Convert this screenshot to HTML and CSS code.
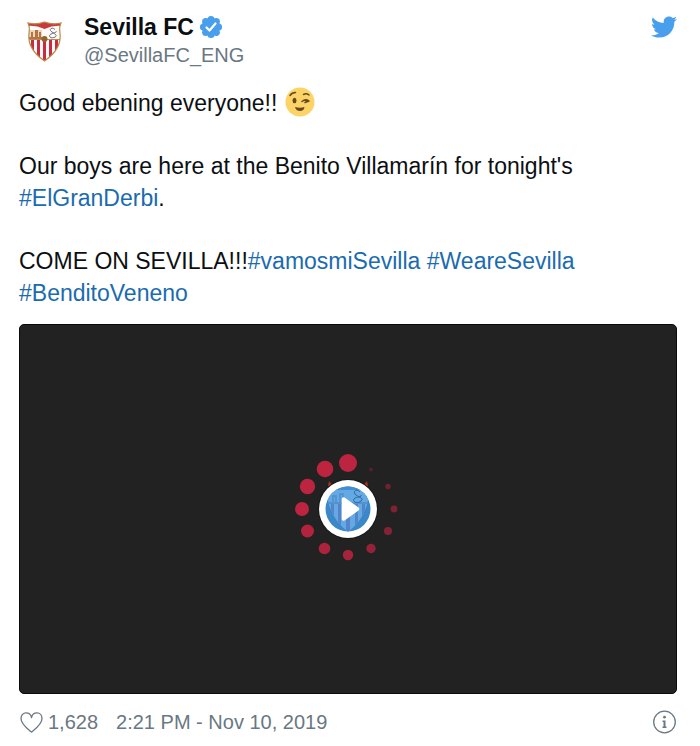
FILE: index.html
```html
<!DOCTYPE html>
<html lang="en">
<head>
    <meta charset="UTF-8">
    <meta name="viewport" content="width=device-width, initial-scale=1.0">
    <title>Sevilla FC on Twitter</title>
    <link rel="stylesheet" href="styles.css">
</head>
<body>
    <article class="tweet">
        <header class="tweet-header">
            <a class="author" href="#">
                <svg class="avatar" viewBox="0 0 52 56" role="img" aria-label="Sevilla FC crest">
                    <defs>
                        <clipPath id="shield">
                            <path d="M9 10Q17 12 25.500 9Q34 12 42 10Q40 14 41 20Q43 36 25.500 48Q8 36 10 20Q11 14 9 10Z"/>
                        </clipPath>
                    </defs>
                    <g clip-path="url(#shield)">
                        <path fill="#fffaf5" d="M5 5h42v45H5z"/>
                        <path fill="#c93a3f" d="M8 8h35v5Q34 12 25.500 16Q17 12 8 13z"/>
                        <path fill="#c72c42" d="M12 27h3v20h-3zM18 27h3v20h-3zM24 27h3v20h-3zM30 27h3v20h-3zM36 27h3v20h-3z"/>
                        <path fill="#ecd9b8" d="M10 17h13v9H10z"/>
                        <path fill="#b3744a" d="M12 19h2v6h-2zM16 17h3v8h-3zM20 19h2v6h-2zM10 24h13v2H10z"/>
                        <path fill="#b4934d" d="M9 26h33v1H9z"/>
                        <path fill="none" stroke="#526273" stroke-width=".9" d="M36 16.500c-3-3-7 0-3 2.500s6 4 2 5.500-6-2-3-3.500 6-1 5-3"/>
                    </g>
                    <circle cx="25.500" cy="26" r="3" fill="#8f642e"/>
                    <path fill="none" stroke="#b68b48" stroke-width="1.200" d="M9 10Q17 12 25.500 9Q34 12 42 10Q40 14 41 20Q43 36 25.500 48Q8 36 10 20Q11 14 9 10Z"/>
                </svg>
                <span class="author-text">
                    <span class="name">Sevilla FC
                        <svg class="verified" viewBox="0 0 24 24" role="img" aria-label="Verified account">
                            <g fill="#4a9fec">
                                <circle cx="12" cy="12" r="9"/>
                                <circle cx="12" cy="4.500" r="3.600"/>
                                <circle cx="17.300" cy="6.700" r="3.600"/>
                                <circle cx="19.500" cy="12" r="3.600"/>
                                <circle cx="17.300" cy="17.300" r="3.600"/>
                                <circle cx="12" cy="19.500" r="3.600"/>
                                <circle cx="6.700" cy="17.300" r="3.600"/>
                                <circle cx="4.500" cy="12" r="3.600"/>
                                <circle cx="6.700" cy="6.700" r="3.600"/>
                            </g>
                            <path d="M7.500 12.500l3 3L16.500 8.500" fill="none" stroke="#fff" stroke-width="2.200" stroke-linecap="round" stroke-linejoin="round"/>
                        </svg>
                    </span>
                    <span class="handle">@SevillaFC_ENG</span>
                </span>
            </a>
            <a class="bird" href="#" aria-label="View on Twitter">
                <svg viewBox="0 0 24 24">
                    <path fill="#4a9fec" d="M23.954 4.569c-.885.389-1.830.654-2.825.775 1.014-.611 1.794-1.574 2.163-2.723-.951.555-2.005.959-3.127 1.184-.896-.959-2.173-1.559-3.591-1.559-2.717 0-4.920 2.203-4.920 4.917 0 .39.045.765.127 1.124C7.691 8.094 4.066 6.130 1.640 3.161c-.427.722-.666 1.561-.666 2.475 0 1.710.87 3.213 2.188 4.096-.807-.026-1.566-.248-2.228-.616v.061c0 2.385 1.693 4.374 3.946 4.827-.413.111-.849.171-1.296.171-.314 0-.615-.03-.916-.086.631 1.953 2.445 3.377 4.604 3.417-1.680 1.319-3.809 2.105-6.102 2.105-.39 0-.779-.023-1.170-.067 2.189 1.394 4.768 2.209 7.557 2.209 9.054 0 13.999-7.496 13.999-13.986 0-.209 0-.42-.015-.63.961-.689 1.800-1.560 2.460-2.548l-.047-.02z"/>
                </svg>
            </a>
        </header>

        <div class="tweet-text">
            <p>Good ebening everyone!!
                <svg class="emoji" viewBox="0 0 30 30" role="img" aria-label="Winking face">
                    <circle cx="15" cy="15" r="14.500" fill="#fcd367"/>
                    <ellipse cx="9.500" cy="13.500" rx="2" ry="2.700" fill="#654a20"/>
                    <path d="M5 8.500q2-3 5.500-3M18.500 7.500q3-1.500 5.500.500M17 14.500q3.500-3 7-.5l-3-.2M24 14l-4 1.500" fill="none" stroke="#654a20" stroke-width="1.500" stroke-linecap="round" stroke-linejoin="round"/>
                    <path d="M10 20q5 1.500 9.500 0q-.5 4-4.500 4t-5-4z" fill="#654a20"/>
                </svg>
            </p>
            <p>Our boys are here at the Benito Villamarín for tonight's <a href="#">#ElGranDerbi</a>.</p>
            <p>COME ON SEVILLA!!!<a href="#">#vamosmiSevilla</a> <a href="#">#WeareSevilla</a> <a href="#">#BenditoVeneno</a></p>
        </div>

        <div class="video">
            <!-- loading dots, growing clockwise round the play button -->
            <svg class="spinner" viewBox="0 0 120 120" aria-hidden="true">
                <path d="M40 37l1-5 5 6zM80 37l-1-5-5 6z" fill="#ac321f"/>
                <g fill="#bc243f">
                    <circle cx="60" cy="14" r="9"/>
                    <circle cx="37" cy="20" r="8.300"/>
                    <circle cx="19.500" cy="37.500" r="7.700"/>
                    <circle cx="14" cy="60" r="7"/>
                    <circle cx="19.500" cy="82" r="6.500" opacity=".95"/>
                    <circle cx="36.500" cy="99.500" r="5.800" opacity=".9"/>
                    <circle cx="60" cy="106" r="5.200" opacity=".85"/>
                    <circle cx="83" cy="99.500" r="4.700" opacity=".75"/>
                    <circle cx="100" cy="82" r="4" opacity=".65"/>
                    <circle cx="106" cy="60" r="3.400" opacity=".6"/>
                    <circle cx="100" cy="37.500" r="2.700" opacity=".5"/>
                    <circle cx="83" cy="20.500" r="2" opacity=".3"/>
                </g>
            </svg>
            <button class="play" type="button" aria-label="Play video">
                <svg viewBox="0 0 60 60">
                    <defs>
                        <clipPath id="disc"><circle cx="30" cy="30" r="22.500"/></clipPath>
                        <clipPath id="crest"><path d="M9 5h42q2 30-21 48Q7 35 9 5z"/></clipPath>
                    </defs>
                    <circle cx="30" cy="30" r="30" fill="#171717"/>
                    <circle cx="30" cy="30" r="29" fill="#fff"/>
                    <circle cx="30" cy="30" r="22.500" fill="#3b88c8"/>
                    <g clip-path="url(#disc)">
                        <g clip-path="url(#crest)">
                            <path fill="#64a9e4" d="M7 5h46v50H7z"/>
                            <path fill="#478bd0" d="M7 7h46v4H7z"/>
                            <path fill="#5585c8" d="M13 25h3v30h-3zM20 25h3v30h-3zM28 25h4v30h-4zM37 25h3v30h-3zM44 25h3v30h-3z"/>
                            <path d="M9 24h42" stroke="#427fb5"/>
                            <path d="M15 23v-6h3v6M22 23v-8h3v8" fill="none" stroke="#4f90ca" stroke-width="1.500"/>
                            <path d="M42 13c-4-4-8 0-4 3s8 3 5 6-9 1-7-2 8-1 7-4" fill="none" stroke="#2e699f" stroke-width="1"/>
                        </g>
                    </g>
                    <path d="M25.500 20l14 10-14 10z" fill="#fff" stroke="#fff" stroke-width="3.500" stroke-linejoin="round"/>
                </svg>
            </button>
        </div>

        <footer class="tweet-footer">
            <a class="likes" href="#" aria-label="1,628 likes">
                <svg class="heart" viewBox="0 0 24 24">
                    <path d="M12.500 22C9.500 19.500 2 14.500 2 8.500C2 5 4.300 2.800 7 2.800C9.800 2.800 12 5 12.500 7.500C13 5 15.200 2.800 18 2.800C20.700 2.800 23 5 23 8.500C23 14.500 15.500 19.500 12.500 22Z" fill="none" stroke="#697882" stroke-width="1.300" stroke-linejoin="round"/>
                </svg>
                1,628
            </a>
            <a class="date" href="#">2:21 PM - Nov 10, 2019</a>
            <a class="info" href="#" aria-label="Twitter Ads info and privacy">
                <svg viewBox="0 0 24 24">
                    <circle cx="11.500" cy="12" r="10.800" fill="none" stroke="#697882" stroke-width="1.300"/>
                    <circle cx="11.500" cy="7.200" r="1.400" fill="#697882"/>
                    <path d="M9.500 10.500h3v6H13.500V18H9.500v-1.500h1V12h-1z" fill="#697882"/>
                </svg>
            </a>
        </footer>
    </article>
</body>
</html>
```
FILE: styles.css
```css
body {
    margin: 0;
    background-color: #ffffff;
    font-family: "Liberation Sans", Arial, sans-serif;
    color: #0c0f12;
}

a {
    color: #1b6bb0;
    text-decoration: none;
}

svg {
    display: block;
}

.tweet {
    padding: 13px 23px 12px 19px;
}

.tweet-header {
    display: flex;
    justify-content: space-between;
    align-items: flex-start;
}

.author {
    display: flex;
    gap: 13px;
}

.avatar {
    width: 52px;
    height: 56px;
}

.author-text {
    display: flex;
    flex-direction: column;
    line-height: 28px;
}

.name {
    display: flex;
    align-items: center;
    gap: 5px;
    color: #0c0f12;
    font-size: 23px;
    font-weight: bold;
}

.verified {
    width: 24px;
    height: 24px;
}

.handle {
    color: #697882;
    font-size: 20px;
}

.bird svg {
    width: 26px;
    height: 28px;
}

.tweet-text {
    margin: 18px 0 15px;
    font-size: 23px;
    line-height: 32px;
}

.tweet-text p {
    margin: 0 0 31px;
}

.tweet-text p:last-child {
    margin-bottom: 0;
}

.emoji {
    display: inline-block;
    width: 30px;
    height: 30px;
    vertical-align: middle;
    margin: -6px 0 0 1px;
}

.video {
    display: grid;
    place-items: center;
    aspect-ratio: 16 / 9;
    border: 1px solid #0b0b0b;
    border-radius: 5px;
    background-color: #222222;
    box-sizing: border-box;
}

/* the spinner and the button share one cell */
.spinner,
.play {
    grid-area: 1 / 1;
}

.spinner {
    width: 120px;
    height: 120px;
}

.play {
    width: 60px;
    height: 60px;
    padding: 0;
    border: none;
    border-radius: 50%;
    background: none;
    cursor: pointer;
}

.tweet-footer {
    display: flex;
    align-items: center;
    margin-top: 16px;
    font-size: 20px;
    line-height: 24px;
}

.tweet-footer a {
    color: #697882;
}

.likes {
    display: flex;
    gap: 5px;
    margin-right: 18px;
}

.heart,
.info svg {
    width: 24px;
    height: 24px;
}

.info {
    margin-left: auto;
}
```
